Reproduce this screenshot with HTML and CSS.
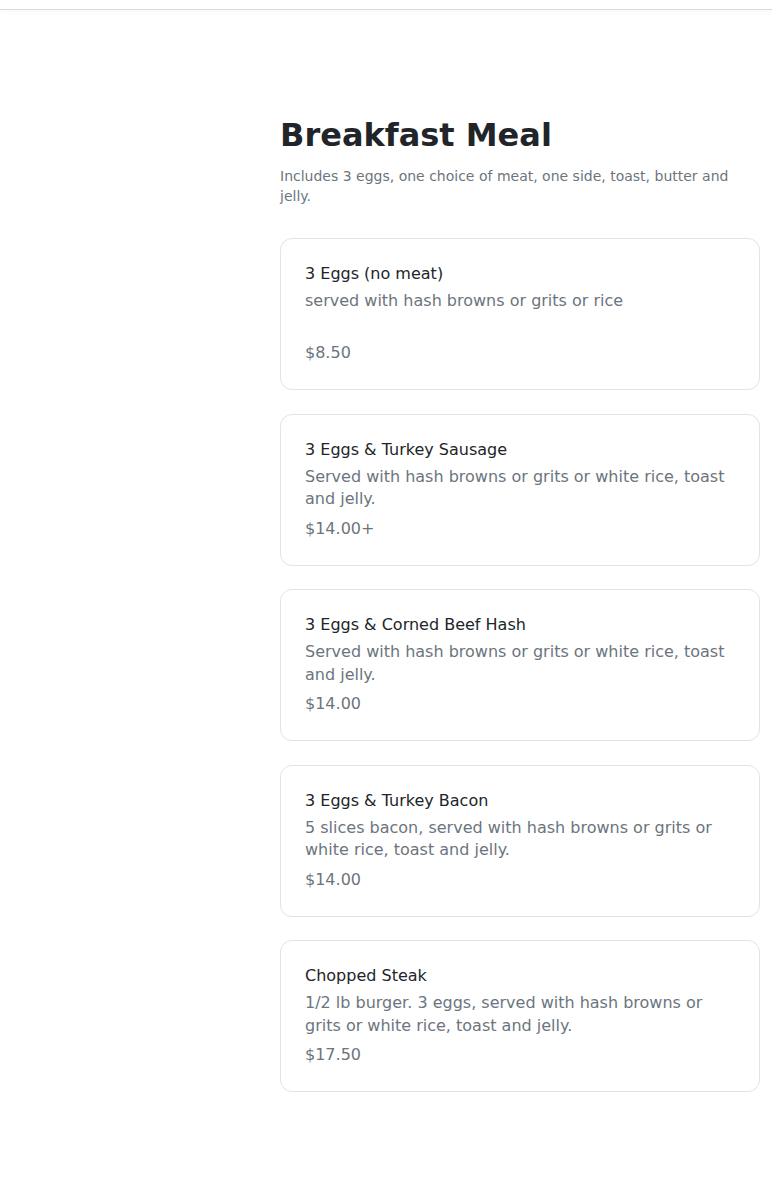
FILE: index.html
```html
<!DOCTYPE html>
<html lang="en">
<head>
<meta charset="utf-8">
<title>Breakfast Meal</title>
<link rel="stylesheet" href="styles.css">
</head>
<body>
<header class="topbar"></header>
<div class="layout">
  <aside class="sidebar"></aside>
  <main class="menu">
    <h1 class="menu-title">Breakfast Meal</h1>
    <p class="menu-desc">Includes 3 eggs, one choice of meat, one side, toast, butter and jelly.</p>
    <div class="items">
      <article class="item">
        <h2 class="item-name">3 Eggs (no meat)</h2>
        <p class="item-desc">served with hash browns or grits or rice</p>
        <p class="item-price">$8.50</p>
      </article>
      <article class="item">
        <h2 class="item-name">3 Eggs &amp; Turkey Sausage</h2>
        <p class="item-desc">Served with hash browns or grits or white rice, toast and jelly.</p>
        <p class="item-price">$14.00+</p>
      </article>
      <article class="item">
        <h2 class="item-name">3 Eggs &amp; Corned Beef Hash</h2>
        <p class="item-desc">Served with hash browns or grits or white rice, toast and jelly.</p>
        <p class="item-price">$14.00</p>
      </article>
      <article class="item">
        <h2 class="item-name">3 Eggs &amp; Turkey Bacon</h2>
        <p class="item-desc">5 slices bacon, served with hash browns or grits or white rice, toast and jelly.</p>
        <p class="item-price">$14.00</p>
      </article>
      <article class="item">
        <h2 class="item-name">Chopped Steak</h2>
        <p class="item-desc">1/2 lb burger. 3 eggs, served with hash browns or grits or white rice, toast and jelly.</p>
        <p class="item-price">$17.50</p>
      </article>
    </div>
  </main>
</div>
</body>
</html>
```
FILE: styles.css
```css
* { box-sizing: border-box; }
html, body {
  margin: 0;
  padding: 0;
  background: #ffffff;
  font-family: "DejaVu Sans", sans-serif;
  color: #212529;
}
.topbar {
  height: 10px;
  border-bottom: 1px solid #dcdcdc;
  box-shadow: 0 2px 4px rgba(0, 0, 0, 0.03);
}
.layout {
  display: grid;
  grid-template-columns: 256px 1fr;
  column-gap: 24px;
  padding: 105px 12px 80px 0;
}
.menu-title {
  margin: 0 0 11px 0;
  font-size: 32px;
  line-height: 40px;
  font-weight: 700;
  color: #212529;
}
.menu-desc {
  margin: 0 0 32px 0;
  font-size: 14px;
  line-height: 20px;
  color: #6c757d;
}
.items {
  display: flex;
  flex-direction: column;
  gap: 23.5px;
}
.item {
  border: 1px solid #e3e3e3;
  border-radius: 12px;
  padding: 24px;
  background: #fff;
}
.item-name {
  margin: 0;
  font-size: 16px;
  line-height: 22px;
  font-weight: 400;
  color: #212529;
}
.item-desc {
  margin: 5px 0 0 0;
  min-height: 45px;
  font-size: 16px;
  line-height: 22.5px;
  color: #6c757d;
}
.item-price {
  margin: 6px 0 0 0;
  font-size: 16px;
  line-height: 24px;
  color: #6c757d;
}
```
